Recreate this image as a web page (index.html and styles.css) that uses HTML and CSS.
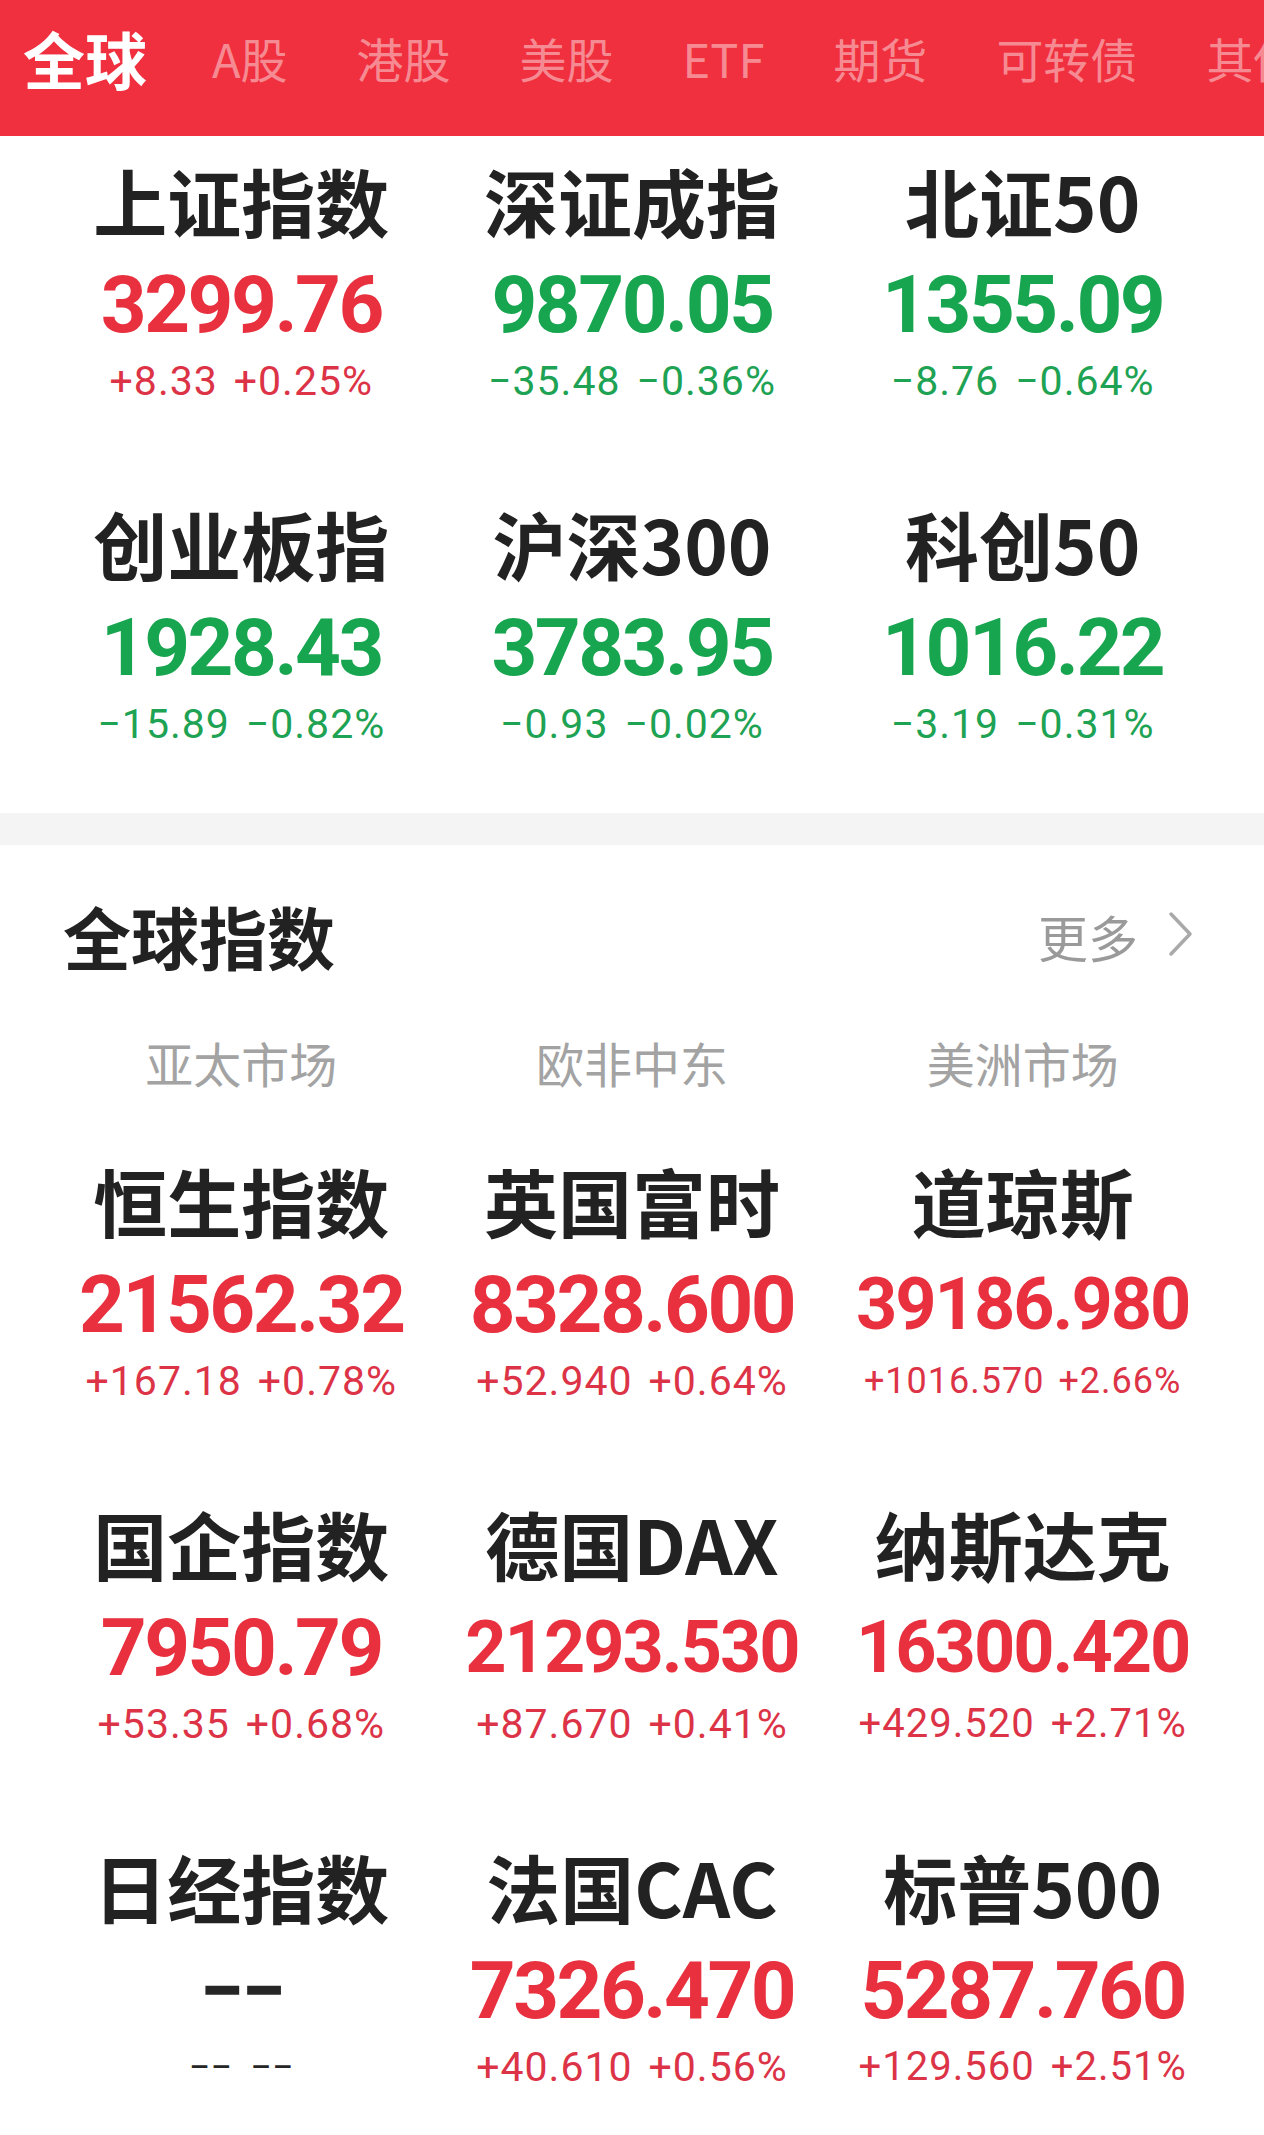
FILE: index.html
```html
<!DOCTYPE html>
<html lang="zh-CN">
<head>
<meta charset="utf-8">
<title>全球</title>
<link rel="stylesheet" href="styles.css">
</head>
<body>
<header class="topbar">
  <nav class="tabs">
    <span class="tab active">全球</span>
    <span class="tab">A股</span>
    <span class="tab">港股</span>
    <span class="tab">美股</span>
    <span class="tab">ETF</span>
    <span class="tab">期货</span>
    <span class="tab">可转债</span>
    <span class="tab">其他</span>
  </nav>
</header>

<section class="domestic">
  <div class="grid">
    <div class="cell">
      <div class="name">上证指数</div>
      <div class="price up">3299.76</div>
      <div class="chg up"><span>+8.33</span><span>+0.25%</span></div>
    </div>
    <div class="cell">
      <div class="name">深证成指</div>
      <div class="price down">9870.05</div>
      <div class="chg down"><span>−35.48</span><span>−0.36%</span></div>
    </div>
    <div class="cell">
      <div class="name">北证50</div>
      <div class="price down">1355.09</div>
      <div class="chg down"><span>−8.76</span><span>−0.64%</span></div>
    </div>
    <div class="cell">
      <div class="name">创业板指</div>
      <div class="price down">1928.43</div>
      <div class="chg down"><span>−15.89</span><span>−0.82%</span></div>
    </div>
    <div class="cell">
      <div class="name">沪深300</div>
      <div class="price down">3783.95</div>
      <div class="chg down"><span>−0.93</span><span>−0.02%</span></div>
    </div>
    <div class="cell">
      <div class="name">科创50</div>
      <div class="price down">1016.22</div>
      <div class="chg down"><span>−3.19</span><span>−0.31%</span></div>
    </div>
  </div>
</section>

<div class="band"></div>

<section class="global">
  <div class="title-row">
    <h2 class="title">全球指数</h2>
    <a class="more">更多
      <svg class="chev" width="26" height="46" viewBox="0 0 26 46"><path d="M3 3 L22 23 L3 43" fill="none" stroke="#a9a9a9" stroke-width="3.5" stroke-linecap="round" stroke-linejoin="round"/></svg>
    </a>
  </div>
  <div class="grid subtabs">
    <span class="subtab">亚太市场</span>
    <span class="subtab">欧非中东</span>
    <span class="subtab">美洲市场</span>
  </div>
  <div class="grid rows">
    <div class="cell">
      <div class="name">恒生指数</div>
      <div class="price up">21562.32</div>
      <div class="chg up"><span>+167.18</span><span>+0.78%</span></div>
    </div>
    <div class="cell">
      <div class="name">英国富时</div>
      <div class="price up">8328.600</div>
      <div class="chg up"><span>+52.940</span><span>+0.64%</span></div>
    </div>
    <div class="cell">
      <div class="name">道琼斯</div>
      <div class="price up long">39186.980</div>
      <div class="chg up sm"><span>+1016.570</span><span>+2.66%</span></div>
    </div>
    <div class="cell">
      <div class="name">国企指数</div>
      <div class="price up">7950.79</div>
      <div class="chg up"><span>+53.35</span><span>+0.68%</span></div>
    </div>
    <div class="cell">
      <div class="name">德国DAX</div>
      <div class="price up long">21293.530</div>
      <div class="chg up"><span>+87.670</span><span>+0.41%</span></div>
    </div>
    <div class="cell">
      <div class="name">纳斯达克</div>
      <div class="price up long">16300.420</div>
      <div class="chg up md"><span>+429.520</span><span>+2.71%</span></div>
    </div>
    <div class="cell">
      <div class="name">日经指数</div>
      <div class="price flat">−−</div>
      <div class="chg flat"><span>−−</span><span>−−</span></div>
    </div>
    <div class="cell">
      <div class="name">法国CAC</div>
      <div class="price up">7326.470</div>
      <div class="chg up"><span>+40.610</span><span>+0.56%</span></div>
    </div>
    <div class="cell">
      <div class="name">标普500</div>
      <div class="price up">5287.760</div>
      <div class="chg up md"><span>+129.560</span><span>+2.51%</span></div>
    </div>
  </div>
</section>
</body>
</html>
```

FILE: styles.css
```css
* { box-sizing: border-box; }
html, body { margin: 0; padding: 0; background: #ffffff; }
body {
  font-family: "Noto Sans CJK SC", "Noto Sans", sans-serif;
  color: #222222;
  width: 1264px;
  overflow-x: hidden;
}

/* top red bar */
.topbar {
  height: 136px;
  background: #f0303e;
  overflow: hidden;
  padding: 0 0 20px 23px;
  display: flex;
  align-items: center;
}
.tabs {
  display: flex;
  align-items: center;
  gap: 69px;
  white-space: nowrap;
}
.tab {
  font-size: 47px;
  line-height: 70px;
  color: rgba(255, 255, 255, 0.45);
  flex: none;
}
.tab.active {
  font-size: 62px;
  font-weight: 700;
  color: #ffffff;
  margin-right: -4px;
}

/* grids */
.grid {
  display: grid;
  grid-template-columns: repeat(3, 1fr);
  padding: 0 46px;
}
.domestic { padding: 23px 0 69px; }
.domestic .grid, .rows { row-gap: 101px; }

.cell {
  display: flex;
  flex-direction: column;
  align-items: center;
  text-align: center;
}
.name {
  font-size: 74px;
  font-weight: 700;
  line-height: 82px;
  height: 82px;
  color: #222222;
  white-space: nowrap;
}
.price {
  font-family: "Roboto", "Liberation Sans", sans-serif;
  font-weight: 700;
  font-size: 80px;
  letter-spacing: -2.5px;
  line-height: 112px;
  height: 112px;
  margin-top: 8px;
  white-space: nowrap;
}
.price.long {
  font-size: 72px;
  letter-spacing: -2px;
}
.chg {
  font-family: "Roboto", "Liberation Sans", sans-serif;
  font-size: 41px;
  letter-spacing: 1px;
  line-height: 40px;
  height: 40px;
  display: flex;
  gap: 16px;
  white-space: nowrap;
}
.chg.md { font-size: 40px; }
.chg.sm { font-size: 36px; gap: 14px; }

.up.price { color: #e8303e; }
.up.chg { color: #dc3347; }
.down.price { color: #18a550; }
.down.chg { color: #1ea253; }
.flat { color: #262626; }
.flat.chg { font-size: 38px; gap: 18px; letter-spacing: 0; }

/* separator */
.band {
  height: 32px;
  background: #f4f4f4;
}

/* global section */
.global { padding-top: 46px; }
.title-row {
  display: flex;
  justify-content: space-between;
  align-items: center;
  height: 90px;
  padding: 0 70px 0 63px;
}
.title {
  margin: 0;
  font-size: 68px;
  font-weight: 700;
  line-height: 90px;
  color: #222222;
}
.more {
  display: flex;
  align-items: center;
  gap: 30px;
  font-size: 50px;
  line-height: 90px;
  color: #9a9a9a;
}
.chev { display: block; margin-top: -4px; }

.subtabs {
  margin-top: 41px;
  height: 80px;
}
.subtab {
  text-align: center;
  font-size: 48px;
  line-height: 80px;
  color: #a3a3a3;
}
.rows { margin-top: 57px; padding-bottom: 40px; }
```
